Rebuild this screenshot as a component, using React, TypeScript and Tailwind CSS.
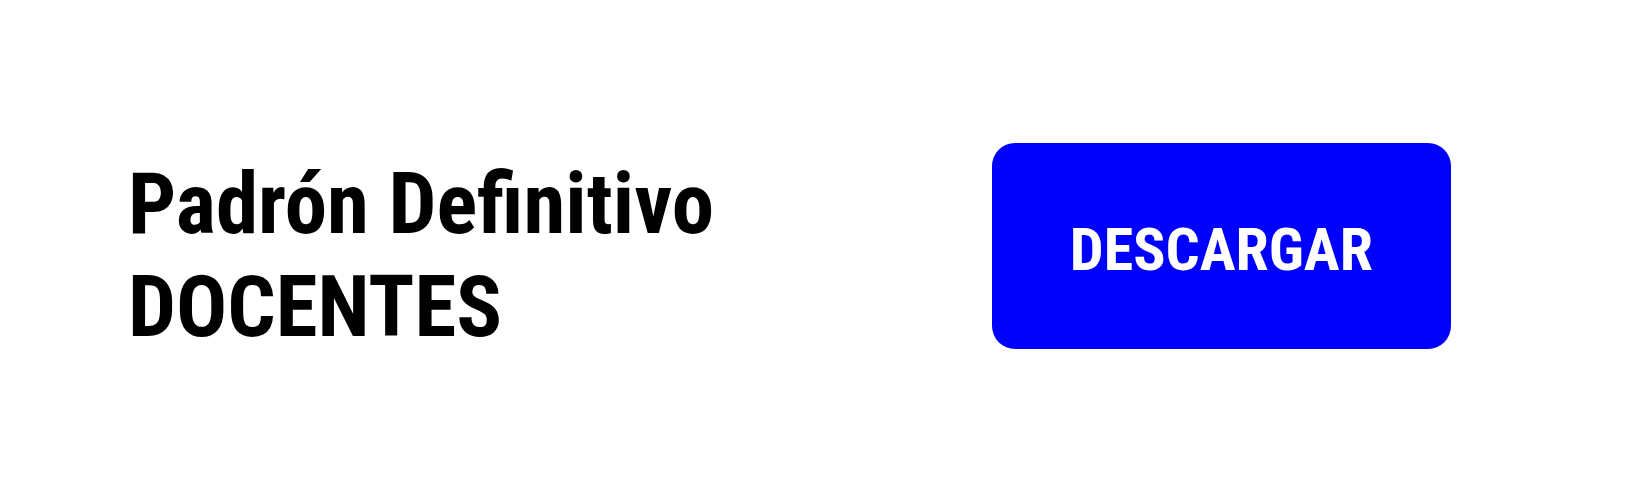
export default function App() {
  return (
    <main className="grid min-h-screen grid-cols-[61%_1fr] items-center bg-white pb-1.5 font-['Roboto_Condensed',Roboto,sans-serif] font-bold text-black">
      <h1 className="pt-5 pl-32 text-[85px] leading-[103px]">
        Padrón Definitivo
        <br />
        DOCENTES
      </h1>
      <div>
        <button type="button" className="block h-[206px] w-[459px] rounded-[23px] bg-[#0000ff] pt-2 text-[60px] text-white">
          DESCARGAR
        </button>
      </div>
    </main>
  );
}
